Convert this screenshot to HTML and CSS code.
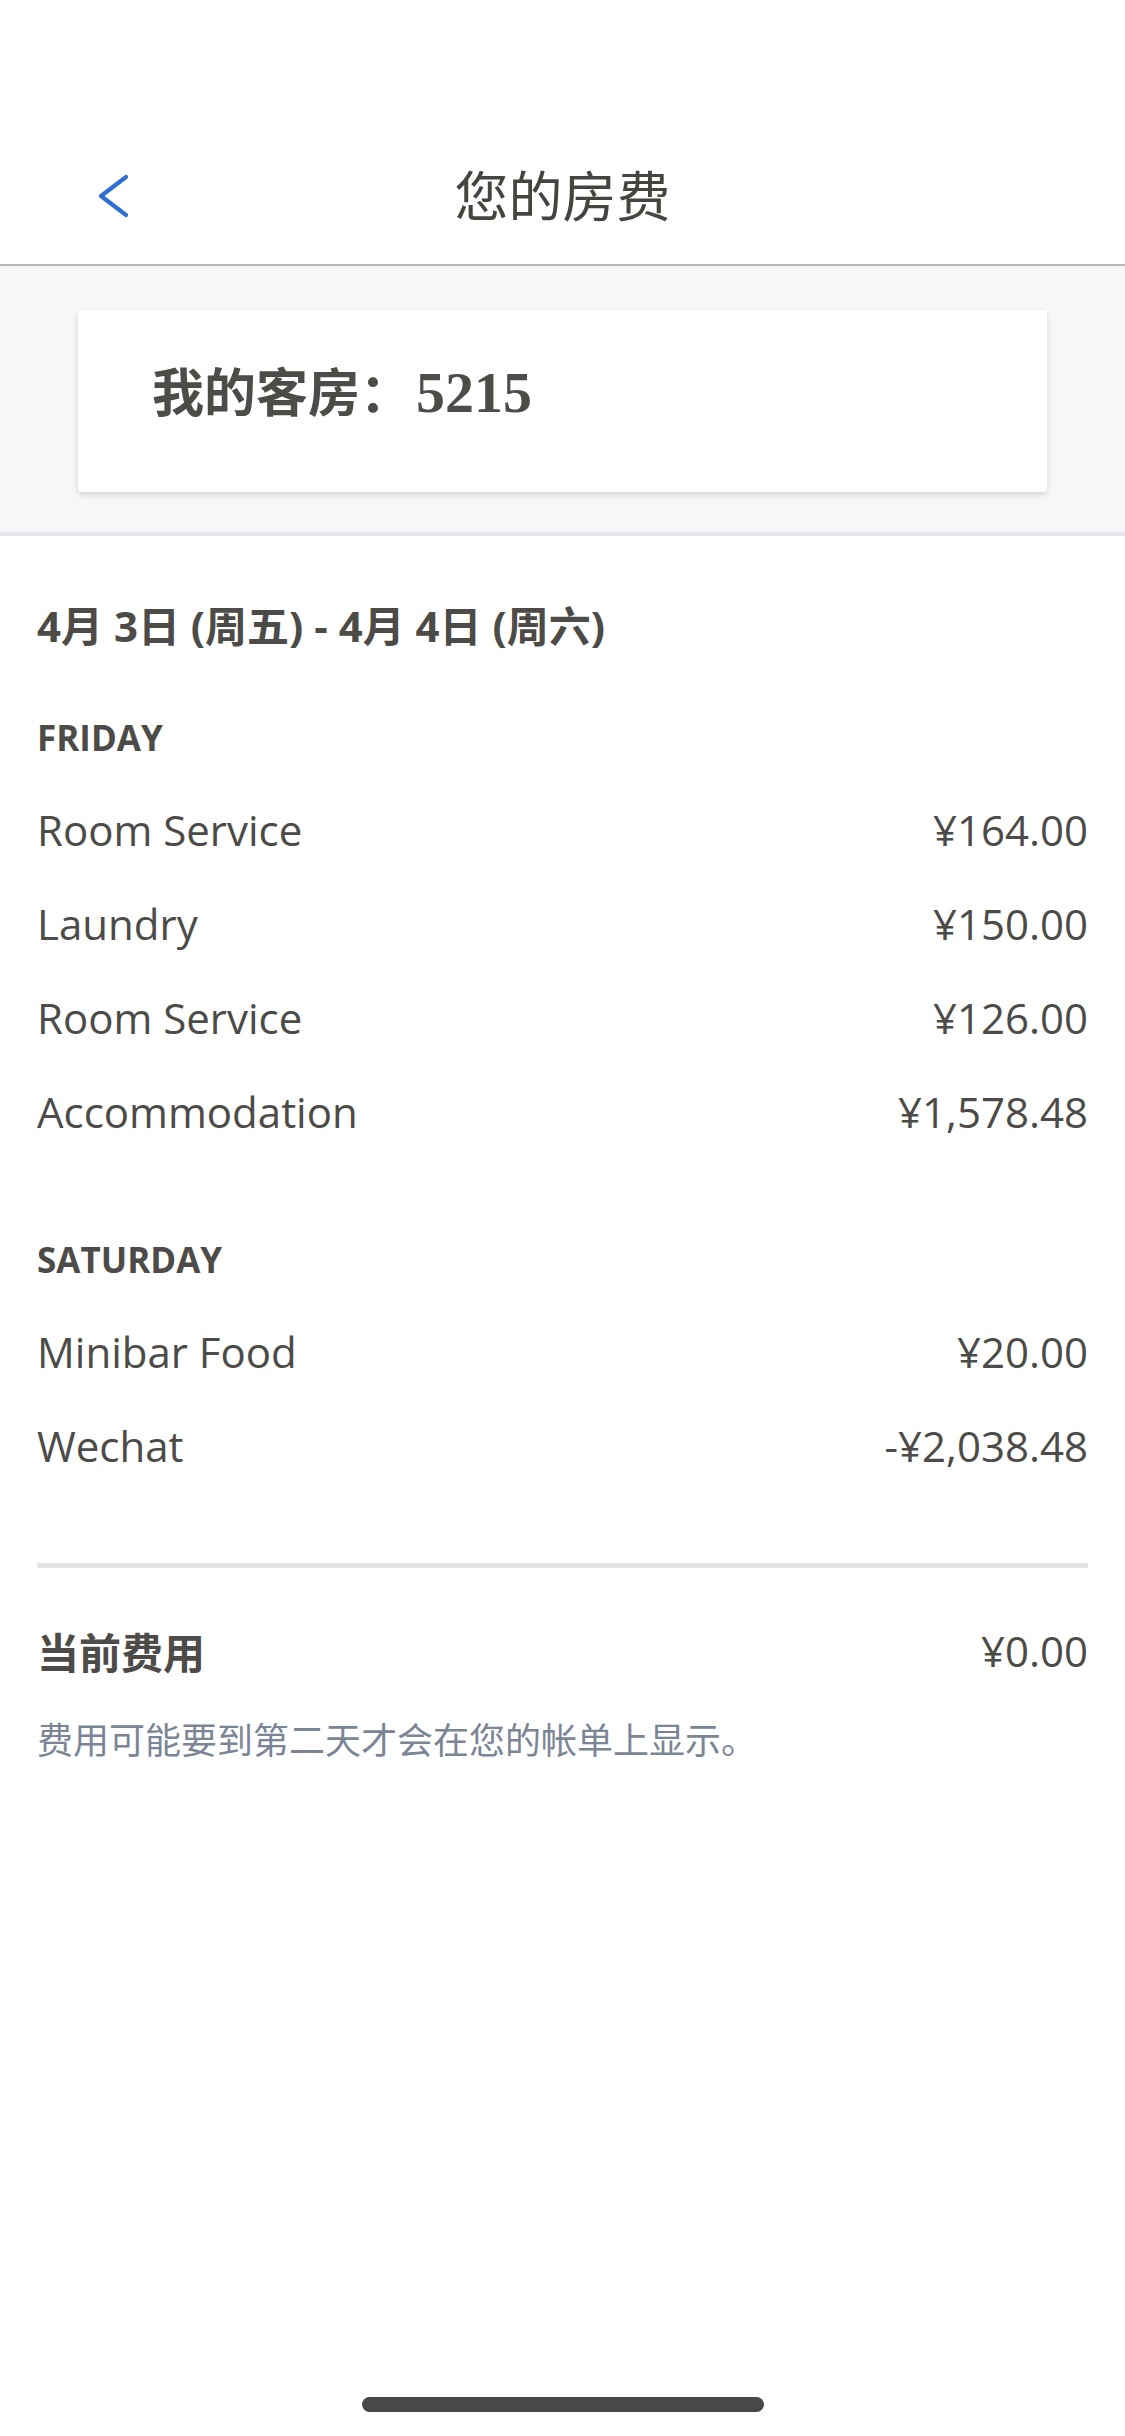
FILE: index.html
```html
<!DOCTYPE html>
<html lang="zh-CN">
<head>
<meta charset="utf-8">
<title>您的房费</title>
<link rel="stylesheet" href="styles.css">
</head>
<body>
<div class="page">
  <div class="status"></div>
  <header class="nav">
    <div class="nav-left">
      <svg class="back" width="32" height="44" viewBox="0 0 32 44" aria-hidden="true">
        <path d="M28 3 L3 22 L28 41" fill="none" stroke="#2f6fcf" stroke-width="4.2" stroke-linecap="round" stroke-linejoin="round"/>
      </svg>
    </div>
    <h1 class="nav-title">您的房费</h1>
    <div class="nav-right"></div>
  </header>

  <section class="room-band">
    <div class="room-card">
      <span class="room-label">我的客房：</span><span class="room-num">5215</span>
    </div>
  </section>

  <main class="bill">
    <h2 class="date-range">4月 3日 (周五) - 4月 4日 (周六)</h2>

    <h3 class="day day-first">FRIDAY</h3>
    <div class="rows">
      <div class="row"><span>Room Service</span><span>¥164.00</span></div>
      <div class="row"><span>Laundry</span><span>¥150.00</span></div>
      <div class="row"><span>Room Service</span><span>¥126.00</span></div>
      <div class="row"><span>Accommodation</span><span>¥1,578.48</span></div>
    </div>

    <h3 class="day day-next">SATURDAY</h3>
    <div class="rows">
      <div class="row"><span>Minibar Food</span><span>¥20.00</span></div>
      <div class="row"><span>Wechat</span><span>-¥2,038.48</span></div>
    </div>

    <div class="divider"></div>

    <div class="total">
      <span class="total-label">当前费用</span>
      <span class="total-amount">¥0.00</span>
    </div>
    <p class="note">费用可能要到第二天才会在您的帐单上显示。</p>
  </main>

  <div class="home-indicator"></div>
</div>
</body>
</html>
```

FILE: styles.css
```css
html, body {
  margin: 0;
  padding: 0;
  background: #ffffff;
}

body {
  font-family: "Open Sans", "Noto Sans CJK SC", sans-serif;
  color: #4c4b48;
}

.page {
  position: relative;
  width: 1125px;
  height: 2436px;
  overflow: hidden;
}

.status {
  height: 128px;
}

.nav {
  height: 136px;
  display: grid;
  grid-template-columns: 1fr auto 1fr;
  align-items: center;
  border-bottom: 2px solid #b9b9b9;
}

.nav-left {
  padding-left: 98px;
  display: flex;
  align-items: center;
}

.back {
  display: block;
}

.nav-title {
  margin: 0 0 4px;
  font-family: "Noto Sans CJK SC", sans-serif;
  font-weight: 400;
  font-size: 54px;
  line-height: 60px;
  color: #45443f;
}

.room-band {
  background: #f6f7f9;
  padding: 44px 78px 40px;
  border-bottom: 4px solid #e4e5e8;
}

.room-card {
  background: #ffffff;
  height: 182px;
  box-sizing: border-box;
  padding: 50px 74px 0;
  border-radius: 3px;
  box-shadow: 0 3px 6px rgba(0, 0, 0, 0.13), 0 0 1px rgba(0, 0, 0, 0.08);
  line-height: 60px;
  color: #4d4c48;
  font-weight: 700;
}

.room-label {
  font-family: "Noto Sans CJK SC", sans-serif;
  font-size: 52px;
}

.room-num {
  font-family: "Liberation Serif", "DejaVu Serif", serif;
  font-size: 58px;
  margin-left: 4px;
}

.bill {
  padding: 0 37px;
}

.date-range {
  margin: 60px 0 0;
  font-size: 42px;
  line-height: 60px;
  font-weight: 700;
  color: #4c4b48;
}

.day {
  margin: 0;
  font-size: 35px;
  line-height: 50px;
  font-weight: 700;
  color: #4c4b48;
}

.day-first {
  margin-top: 57px;
}

.day-next {
  margin-top: 77px;
}

.rows {
  margin-top: 19px;
}

.row {
  height: 94px;
  display: flex;
  justify-content: space-between;
  align-items: center;
  font-size: 42px;
  color: #4c4b48;
}

.divider {
  margin-top: 71px;
  height: 5px;
  background: #e4e5e7;
}

.total {
  margin-top: 52px;
  height: 60px;
  display: flex;
  justify-content: space-between;
  align-items: center;
}

.total-label {
  font-family: "Noto Sans CJK SC", sans-serif;
  font-weight: 700;
  font-size: 42px;
}

.total-amount {
  font-size: 42px;
}

.note {
  margin: 33px 0 0;
  height: 50px;
  line-height: 50px;
  font-family: "Noto Sans CJK SC", sans-serif;
  font-size: 36px;
  color: #7b8596;
}

.home-indicator {
  position: absolute;
  left: 362px;
  bottom: 24px;
  width: 402px;
  height: 15px;
  border-radius: 8px;
  background: #484848;
}
```
